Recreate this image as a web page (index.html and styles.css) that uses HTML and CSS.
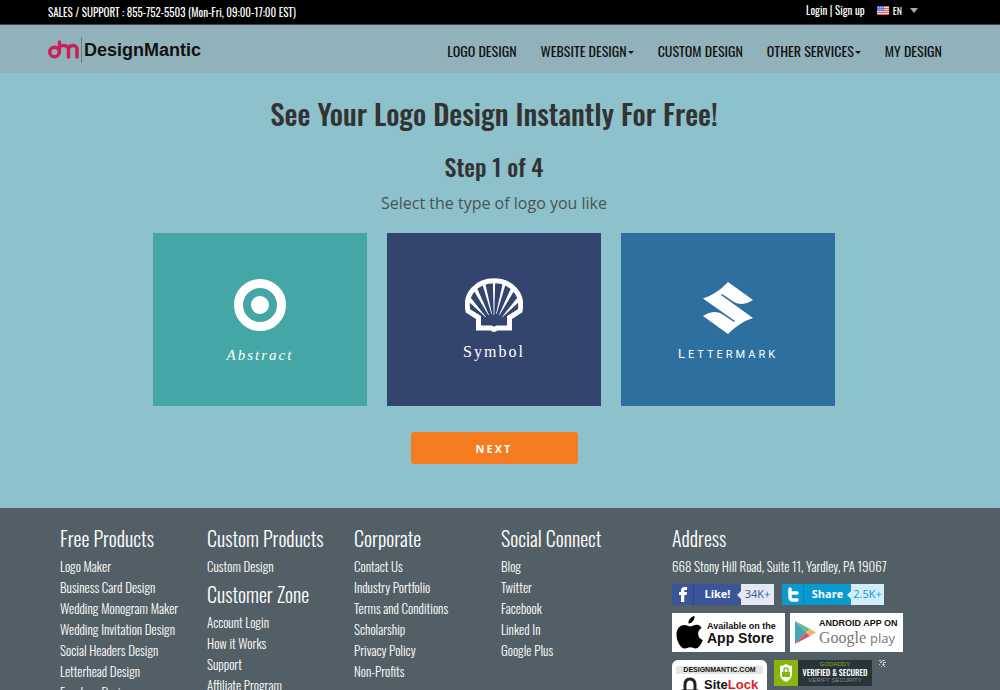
FILE: index.html
```html
<!DOCTYPE html>
<html lang="en">
<head>
    <meta charset="UTF-8">
    <meta name="viewport" content="width=device-width, initial-scale=1.0">
    <title>DesignMantic</title>
    <link rel="stylesheet" href="styles.css">
</head>
<body>
    <div class="topbar">
        <span>SALES / SUPPORT : 855-752-5503 (Mon-Fri, 09:00-17:00 EST)</span>
        <div class="account">
            <span><a href="#">Login</a> | <a href="#">Sign up</a></span>
            <button type="button" class="lang">
                <svg width="12" height="9" viewBox="0 0 12 9"><rect width="12" height="9" fill="#f6d5d5"/><path d="M0 .5h12M0 2.5h12M0 4.5h12M0 6.5h12M0 8.5h12" stroke="#e55a5a"/><rect width="7" height="5" fill="#4a7be0"/><path d="M1 1.5h5M1 3.5h5" stroke="#b9cdf7" stroke-dasharray="1 1"/></svg>
                <span>EN</span>
                <svg width="8" height="5" viewBox="0 0 8 5"><path d="M0 0h8L4 5z" fill="#aaa"/></svg>
            </button>
        </div>
    </div>

    <header class="header">
        <a href="#" class="logo">
            <svg width="31" height="20" viewBox="0 0 31 20" fill="none" stroke="#c9205a" stroke-width="3.400" stroke-linecap="round"><circle cx="6.500" cy="12" r="4.800"/><path d="M11.500 2v10M11.500 6.500q2-1 4-1 5 0 5 4.500v7M20.500 10q0-4.500 4.300-4.500T29 10v7"/></svg>
            <span class="logo-name">DesignMantic</span>
        </a>
        <nav class="nav">
            <a href="#">LOGO DESIGN</a>
            <a href="#" class="has-menu">WEBSITE DESIGN</a>
            <a href="#">CUSTOM DESIGN</a>
            <a href="#" class="has-menu">OTHER SERVICES</a>
            <a href="#">MY DESIGN</a>
        </nav>
    </header>

    <main class="wizard">
        <h1>See Your Logo Design Instantly For Free!</h1>
        <h2>Step 1 of 4</h2>
        <p>Select the type of logo you like</p>
        <div class="types">
            <button type="button" class="type abstract">
                <svg width="52" height="52" viewBox="0 0 52 52"><circle cx="26" cy="26" r="21.500" fill="none" stroke="#fff" stroke-width="9"/><circle cx="26" cy="26" r="9" fill="#fff"/></svg>
                <span>Abstract</span>
            </button>
            <button type="button" class="type symbol">
                <svg width="58" height="54" viewBox="0 0 58 54">
                    <path d="M13.500 50V39.500L3 33C-1 15 13 2.800 29 2.800S59 15 55 33L44.500 39.500V50H32l-3 1.500L26 50z" fill="none" stroke="#fff" stroke-width="5"/>
                    <path d="M27.800 3h2.400l-.9 34h-.6zM17 5l3-1 7 32h-.6zM41 5l-3-1-7 32h.6zM9 13l3-3 12 27-.5.200zM49 13l-3-3-12 27 .5.200zM3 23l3-3 15 19-.4.300zM55 23l-3-3-15 19 .4.300z" fill="#fff"/>
                </svg>
                <span>Symbol</span>
            </button>
            <button type="button" class="type lettermark">
                <svg width="50" height="52" viewBox="0 0 50 52"><path d="M25 0L50 18Q39 25 31 20L19 12l-1 1L50 36Q37 40 25 52L0 34Q11 27 19 32L31 40l1-1L0 16.500Q14 12 25 0z" fill="#fff"/></svg>
                <span><b>L</b>ETTERMARK</span>
            </button>
        </div>
        <button type="button" class="next">NEXT</button>
    </main>

    <footer class="footer">
        <div class="col">
            <h3>Free Products</h3>
            <ul>
                <li><a href="#">Logo Maker</a></li>
                <li><a href="#">Business Card Design</a></li>
                <li><a href="#">Wedding Monogram Maker</a></li>
                <li><a href="#">Wedding Invitation Design</a></li>
                <li><a href="#">Social Headers Design</a></li>
                <li><a href="#">Letterhead Design</a></li>
                <li><a href="#">Envelope Design</a></li>
            </ul>
        </div>
        <div class="col">
            <h3>Custom Products</h3>
            <ul>
                <li><a href="#">Custom Design</a></li>
            </ul>
            <h3>Customer Zone</h3>
            <ul>
                <li><a href="#">Account Login</a></li>
                <li><a href="#">How it Works</a></li>
                <li><a href="#">Support</a></li>
                <li><a href="#">Affiliate Program</a></li>
            </ul>
        </div>
        <div class="col">
            <h3>Corporate</h3>
            <ul>
                <li><a href="#">Contact Us</a></li>
                <li><a href="#">Industry Portfolio</a></li>
                <li><a href="#">Terms and Conditions</a></li>
                <li><a href="#">Scholarship</a></li>
                <li><a href="#">Privacy Policy</a></li>
                <li><a href="#">Non-Profits</a></li>
            </ul>
        </div>
        <div class="col">
            <h3>Social Connect</h3>
            <ul>
                <li><a href="#">Blog</a></li>
                <li><a href="#">Twitter</a></li>
                <li><a href="#">Facebook</a></li>
                <li><a href="#">Linked In</a></li>
                <li><a href="#">Google Plus</a></li>
            </ul>
        </div>
        <div class="col address">
            <h3>Address</h3>
            <p>668 Stony Hill Road, Suite 11, Yardley, PA 19067</p>
            <div class="badges social">
                <a href="#" class="share facebook">
                    <svg width="22" height="21" viewBox="0 0 22 21"><path d="M9 18v-7H7V8h2V6.500C9 4 10.500 3 12.500 3H15v3h-1.500c-1 0-1.200.4-1.200 1.200V8H15l-.4 3h-2.300v7z" fill="#fff"/><path d="M21.500 0v21" stroke="#2c4682"/></svg>
                    <span class="label">Like!</span><span class="count">34K+</span>
                </a>
                <a href="#" class="share twitter">
                    <svg width="22" height="21" viewBox="0 0 22 21"><path d="M8 5v8q0 3 3 3h4M8 9h7" fill="none" stroke="#fff" stroke-width="3.500" stroke-linecap="round"/><path d="M21.500 0v21" stroke="#0784b5"/></svg>
                    <span class="label">Share</span><span class="count">2.5K+</span>
                </a>
            </div>
            <div class="badges stores">
                <a href="#" class="store">
                    <svg width="27" height="34" viewBox="0 0 27 34"><path d="M18.500 0c.4 4-2.800 7.500-6 7.500C12 4 15 .600 18.500 0zM25.500 12c-5 3-4.300 10 1.200 12-1.600 4.500-4.200 8.500-7 8.500-2 0-3-1.200-5.500-1.200s-3.500 1.300-5.500 1.300C4.500 32.500.500 25 .500 18.500.500 12 4.500 9 8.500 9c2.500 0 4 1.400 6 1.400 1.800 0 3.500-1.600 6.500-1.600 1.800 0 3.500 1.200 4.500 3.200z"/></svg>
                    <span><small>Available on the</small><strong>App Store</strong></span>
                </a>
                <a href="#" class="store play">
                    <svg width="22" height="25" viewBox="0 0 22 25"><path d="M1 1v23l11-11.500z" fill="#46a6b5"/><path d="M1 1l15 8-4 3.500z" fill="#6cb785"/><path d="M1 24l15-8-4-3.500z" fill="#d55265"/><path d="M16 9l6 3.500-6 3.500-4-3.500z" fill="#f3b265"/></svg>
                    <span><small>ANDROID APP ON</small><span class="google">Google <i>play</i></span></span>
                </a>
            </div>
            <div class="badges trust">
                <a href="#" class="sitelock">
                    <small>DESIGNMANTIC.COM</small>
                    <span class="lock">
                        <svg width="20" height="22" viewBox="0 0 20 22" fill="none" stroke="#222" stroke-width="3"><path d="M3 22v-8h14v8M5 13V8q0-6 5-6t5 6v5"/><path d="M14 13l-3 5" stroke="#d22" stroke-width="2"/></svg>
                        <b>Site<em>Lock</em></b>
                    </span>
                </a>
                <a href="#" class="godaddy">
                    <svg width="24" height="26" viewBox="0 0 24 26"><rect width="24" height="26" fill="#88b70c"/><path d="M12 4q3 2 6 2v8q0 5-6 8-6-3-6-8V6q3 0 6-2z" fill="#fff"/><rect x="8" y="12" width="8" height="5" fill="#88b70c"/><path d="M10 12v-2q0-2 2-2t2 2v2" fill="none" stroke="#88b70c" stroke-width="1.500"/></svg>
                    <span><small>GODADDY</small><b>VERIFIED &amp; SECURED</b><small class="verify">VERIFY SECURITY</small></span>
                </a>
                <svg width="7" height="7" viewBox="0 0 7 7"><path d="M0 .5h2M3 .5h3M1 2.500h2M4 2.500h3M0 4.500h1M3 4.500h3M2 6.500h1M5 6.500h1M2.500 1v2M4.500 3v3" stroke="#c4cacd"/></svg>
            </div>
        </div>
    </footer>
</body>
</html>
```
FILE: styles.css
```css
* { box-sizing: border-box; }
body { margin: 0; background-color: #8dc1cc; color: #333; font-family: Oswald, "Liberation Sans", sans-serif; font-weight: 300; }
a { color: inherit; text-decoration: none; }
button { border: none; font-family: inherit; font-weight: inherit; cursor: pointer; }
svg { display: block; flex: none; }
h1, h2, h3, p, ul { margin: 0; padding: 0; }
ul { list-style: none; }

.topbar { display: flex; justify-content: space-between; height: 25px; padding: 0 82px 0 48px; background-color: #000; border-bottom: 1px solid #444; color: #fff; font-size: 11px; font-weight: 400; line-height: 24px; white-space: nowrap; }
.account { display: flex; gap: 12px; line-height: 20px; }
.lang { display: flex; align-items: center; gap: 4px; height: 20px; padding: 0; background: none; color: #fff; font-size: 10px; }
.lang span { margin-right: 4px; }

.header { display: flex; justify-content: space-between; align-items: center; height: 48px; padding: 2px 58px 0 48px; background-color: #92b2bb; color: #111; }
.logo { display: flex; align-items: center; gap: 2px; }
.logo-name { padding-left: 2px; border-left: 1px solid #667b82; font-family: "Liberation Sans", sans-serif; font-size: 18px; font-weight: bold; line-height: 26px; }
.nav { display: flex; gap: 24px; font-size: 14px; font-weight: 400; white-space: nowrap; }
.has-menu::after { content: ""; display: inline-block; margin-left: 1px; border: 3px solid transparent; border-top-color: #111; border-bottom: 0; vertical-align: middle; }

.wizard { display: flex; flex-direction: column; align-items: center; padding: 20px 12px 44px 0; text-align: center; }
h1 { font-size: 29px; font-weight: 500; line-height: 40px; }
h2 { margin-top: 14px; font-size: 24px; font-weight: 500; line-height: 38px; }
.wizard p { margin-top: 6px; color: #4b5254; font-family: "Open Sans", sans-serif; font-size: 16px; font-weight: 400; line-height: 24px; }
.types { display: flex; gap: 20px; margin-top: 18px; }
.type { display: flex; flex-direction: column; align-items: center; width: 214px; height: 173px; padding: 46px 0 0; color: #fff; font-size: 16px; line-height: 20px; }
.type span { margin-top: 14px; letter-spacing: 2px; }
.abstract { background-color: #45a6a6; font-family: "Liberation Serif", serif; font-size: 15px; font-style: italic; }
.symbol { padding-top: 45px; background-color: #33446f; font-family: "Liberation Serif", serif; }
.symbol span { margin-top: 10px; }
.lettermark { padding-top: 49px; background-color: #2d709f; font-family: Roboto, sans-serif; font-size: 11px; font-weight: 400; }
.lettermark span { margin-top: 10px; letter-spacing: 3px; }
.lettermark b { font-size: 13px; font-weight: normal; }
.next { width: 167px; height: 32px; margin-top: 26px; border-radius: 3px; background-color: #f47b20; color: #fff; font-family: "Open Sans", sans-serif; font-size: 11px; font-weight: bold; letter-spacing: 2px; }

.footer { display: grid; grid-template-columns: 147px 147px 147px 171px 1fr; padding: 16px 60px 20px; background-color: #535f67; color: #fff; font-size: 13px; line-height: 21px; white-space: nowrap; }
h3 { font-size: 20px; font-weight: 300; line-height: 28px; }
.footer h3 { margin-bottom: 4px; }
.footer ul + h3 { margin-top: 3px; }
.badges { display: flex; font-weight: 400; }
.social { gap: 8px; margin-top: 7px; }
.share { display: flex; width: 102px; height: 21px; font-family: "Open Sans", sans-serif; font-size: 11px; line-height: 20px; }
.facebook { background-color: #3b559b; }
.twitter { background-color: #0999cf; }
.label { flex: 1; font-weight: bold; text-align: center; }
.count { position: relative; width: 33px; background-color: #e4e8f3; color: #3b559b; text-align: center; }
.count::before { content: ""; position: absolute; top: 7px; left: -4px; border: 4px solid transparent; border-right-color: #e4e8f3; border-left: 0; }
.twitter .count { background-color: #d2eefa; color: #0999cf; }
.twitter .count::before { border-right-color: #d2eefa; }
.stores { gap: 5px; margin-top: 8px; }
.store { display: flex; align-items: center; gap: 4px; width: 113px; height: 39px; padding-left: 4px; background-color: #fff; color: #111; font-family: "Liberation Sans", sans-serif; line-height: 11px; }
.store small { display: block; font-size: 9px; font-weight: bold; }
.store strong { font-size: 14px; line-height: 13px; }
.play { gap: 3px; }
.play small { text-align: right; }
.google { color: #777; font-family: "Liberation Serif", serif; font-size: 16px; line-height: 17px; }
.google i { font-family: "Open Sans", sans-serif; font-size: 13px; font-style: normal; }
.trust { gap: 7px; margin-top: 8px; }
.sitelock { width: 95px; padding: 6px 4px; border-radius: 6px; background-color: #fff; color: #111; font-family: "Liberation Sans", sans-serif; text-align: center; }
.sitelock small { display: block; background-color: #e5e5e5; font-size: 7px; font-weight: bold; line-height: 8px; }
.lock { display: flex; align-items: center; gap: 4px; margin-top: 3px; padding-left: 4px; font-size: 13px; line-height: 15px; }
.lock b { align-self: flex-start; }
.lock em { color: #d22; font-style: normal; }
.godaddy { display: flex; width: 98px; height: 26px; background-color: #29343a; font-family: "Liberation Sans", sans-serif; line-height: 8px; text-align: center; }
.godaddy span { flex: 1; }
.godaddy small, .godaddy b { display: block; font-size: 6px; }
.godaddy b { font-family: Oswald, sans-serif; font-size: 8px; font-weight: 500; }
.godaddy small { color: #88b70c; }
.godaddy .verify { color: #80898d; }
```
